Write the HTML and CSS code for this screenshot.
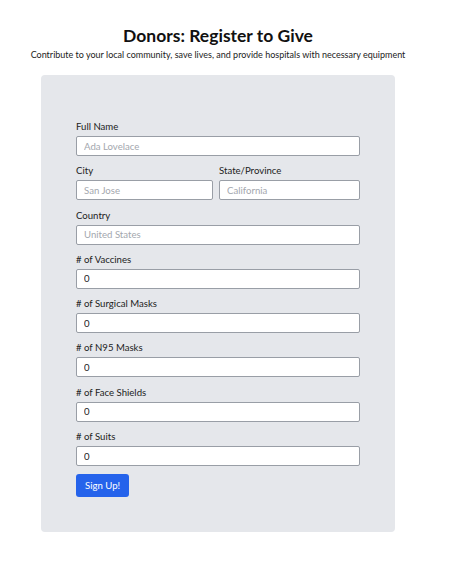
FILE: index.html
```html
<!doctype html>
<html lang="en">
    <head>
        <meta charset="utf-8">
        <title>Donors: Register to Give</title>
        <meta name="viewport" content="width=device-width, initial-scale=1">
        <link rel="stylesheet" href="styles.css">
    </head>
    <body>
        <div class="page">
            <header class="head">
                <h1>Donors: Register to Give</h1>
                <p>Contribute to your local community, save lives, and provide hospitals with necessary equipment</p>
            </header>

            <form class="card">
                <div class="field">
                    <label for="fullName">Full Name</label>
                    <input id="fullName" type="text" placeholder="Ada Lovelace" />
                </div>

                <div class="field-row">
                    <div class="field">
                        <label for="city">City</label>
                        <input id="city" type="text" placeholder="San Jose" />
                    </div>
                    <div class="field">
                        <label for="state">State/Province</label>
                        <input id="state" type="text" placeholder="California" />
                    </div>
                </div>

                <div class="field">
                    <label for="country">Country</label>
                    <input id="country" type="text" placeholder="United States" />
                </div>

                <div class="field">
                    <label for="vaccines"># of Vaccines</label>
                    <input id="vaccines" type="text" value="0" />
                </div>

                <div class="field">
                    <label for="masks"># of Surgical Masks</label>
                    <input id="masks" type="text" value="0" />
                </div>

                <div class="field">
                    <label for="n95"># of N95 Masks</label>
                    <input id="n95" type="text" value="0" />
                </div>

                <div class="field">
                    <label for="shields"># of Face Shields</label>
                    <input id="shields" type="text" value="0" />
                </div>

                <div class="field">
                    <label for="suits"># of Suits</label>
                    <input id="suits" type="text" value="0" />
                </div>

                <button type="button" class="button blue">Sign Up!</button>
            </form>
        </div>
    </body>
</html>
```

FILE: styles.css
```css
/* common css */
html, body { font-family: Lato, "Noto Sans", sans-serif; color: #111; }
body { margin: 0; background: #fff; }
.page { width: 436px; }

.head { text-align: center; padding-top: 25px; }
.head h1 { margin: 0; font-size: 17.5px; line-height: 22px; font-weight: 700; }
.head p { margin: 1px 0 0 0; font-size: 9px; line-height: 13px; color: #222; }

.card {
    width: 354px;
    margin: 14px auto 0 auto;
    box-sizing: border-box;
    padding: 45px 35px 35px 35px;
    background: #e5e7eb;
    border-radius: 4px;
}

.field { display: flex; flex-direction: column; margin-bottom: 8.3px; min-width: 0; }
.field label { font-size: 9.6px; line-height: 14px; margin-bottom: 2px; color: #222; }
.field input {
    height: 20px;
    box-sizing: border-box;
    border: solid 1px #999ea6;
    border-radius: 2px;
    background: #fff;
    padding: 0 7px;
    font-family: inherit;
    font-size: 9.6px;
    color: #222;
    width: 100%;
}
.field input::placeholder { color: #a3a7ae; }

.field-row { display: grid; grid-template-columns: 137px 1fr; column-gap: 6px; }

.button {
    display: block;
    border: 0;
    border-radius: 3px;
    height: 23px;
    padding: 0 9px;
    font-family: inherit;
    font-size: 9.6px;
    color: #fff;
    cursor: pointer;
}
.button.blue { background: #2563eb; }
.field + .button { margin-top: 1.5px; }
```
